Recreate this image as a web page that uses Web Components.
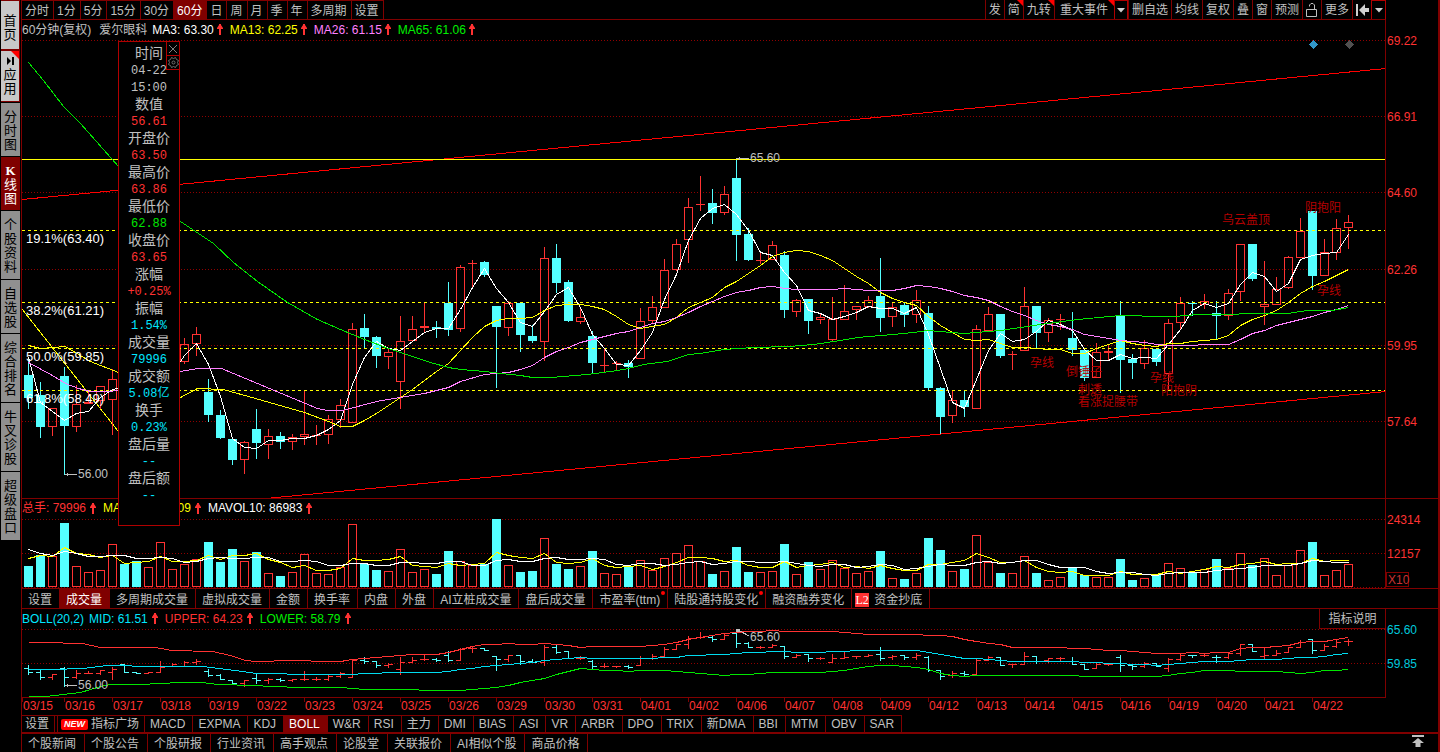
<!DOCTYPE html>
<html lang="zh-CN">
<head>
<meta charset="utf-8">
<title>爱尔眼科 60分钟</title>
<style>
html,body{margin:0;height:100%;background:#000}
body{font:12px/16px "Liberation Sans","Noto Sans CJK SC",sans-serif;color:#c0c0c0;--line:#800000}
</style>
</head>
<body>
<trading-app></trading-app>
<script>
const BASE = '*{box-sizing:border-box}button{font:inherit;color:inherit;background:none;border:0;margin:0;padding:0;border-radius:0;white-space:nowrap}';
class Base extends HTMLElement {
  constructor() { super(); this.attachShadow({ mode: 'open' }); }
  connectedCallback() { this.shadowRoot.innerHTML = '<style>' + BASE + this.css() + '</style>' + this.html(); }
  css() { return ''; }
  html() { return ''; }
}

/* Price data: high, body top, body bottom, low, direction (1 up, 0 down), volume bar top */
const DATA = `357 375 398 408 0 566|382 395 427 437 0 555|408 408 426 435 1 556|367 376 426 474 0 523|385 404 426 431 1 566|392 402 403 403 1 572|386 386 400 408 1 570|369 379 399 434 1 544|352 352 397 397 0 564|397 397 402 402 0 561|395 397 400 404 1 567|336 369 397 397 1 542|345 352 363 365 1 569|338 344 361 363 1 564|327 334 343 355 1 559|379 392 415 421 0 542|410 415 438 438 0 562|439 439 460 464 0 549|441 442 459 473 1 561|409 429 443 458 0 552|429 436 444 458 1 573|432 436 442 448 0 576|434 437 441 449 1 572|391 434 436 444 1 554|425 435 435 444 1 573|415 419 434 443 1 574|399 405 419 427 1 567|323 329 422 422 1 524|314 328 337 348 0 564|336 337 356 367 0 570|348 352 356 368 1 571|316 341 381 408 1 549|316 329 340 340 1 572|303 326 327 332 1 569|321 327 329 337 0 574|282 303 330 335 0 551|265 267 328 331 1 561|260 263 263 286 1 565|261 262 275 276 0 564|306 306 327 387 0 519|301 303 327 335 1 565|303 303 335 351 0 572|325 336 341 342 0 571|247 258 341 360 1 538|244 258 283 292 0 564|280 282 321 321 0 569|309 317 321 323 1 566|331 336 363 373 0 551|348 365 365 371 1 573|361 363 363 370 1 574|360 363 367 377 0 567|308 321 358 358 1 560|296 307 320 322 1 570|259 270 307 307 1 558|239 244 269 270 1 553|198 207 239 262 1 545|176 204 204 210 1 561|189 203 213 223 0 574|186 194 212 214 1 571|159 178 235 260 0 547|228 234 260 260 0 572|252 260 260 263 1 572|241 245 259 259 1 571|251 255 310 317 0 544|299 300 311 316 1 574|299 299 321 333 0 562|313 317 319 323 1 569|297 319 339 341 1 560|285 311 319 319 1 568|306 306 309 319 1 573|296 300 306 307 1 571|258 296 318 331 0 551|303 307 316 326 1 578|303 305 315 326 0 579|290 300 314 322 1 573|306 313 388 389 0 538|387 388 417 433 0 550|391 400 415 422 1 571|390 400 407 416 0 569|325 329 408 408 1 535|307 314 330 330 1 562|314 314 356 357 0 573|351 354 354 369 1 573|287 306 350 350 1 556|306 306 333 348 0 573|318 320 332 341 1 580|314 319 319 329 1 577|312 338 350 355 0 568|350 350 378 380 0 575|343 352 377 377 1 577|345 351 352 359 1 577|301 315 360 392 0 559|354 359 363 378 0 580|340 348 363 368 1 578|348 349 362 365 0 574|319 323 373 389 1 563|297 303 322 329 1 568|301 303 304 315 0 572|294 301 304 308 1 569|301 313 316 339 0 559|289 293 315 319 1 568|244 244 291 300 1 553|244 244 279 280 0 565|261 304 306 324 1 558|277 289 304 304 1 575|256 257 287 288 1 565|218 231 257 257 1 550|211 211 276 289 0 542|239 252 275 275 1 575|219 228 252 259 1 570|215 222 227 248 1 564`
  .split('|').map(r => { const [h, t, b, l, up, v] = r.split(' ').map(Number); return { h, t, b, l, up, v, c: up ? t : b, o: up ? b : t }; });
const X = i => 28 + 12 * i;
const avg = (a, i, n) => { let s = 0; for (let k = 0; k < n; k++) s += a[i - k]; return s / n; };
const series = (a, n, from) => a.map((_, i) => i).filter(i => i >= from).map(i => [X(i), avg(a, i, n)]);
const line = (pts, color, extra = '') => `<polyline fill="none" stroke="${color}" ${extra} points="${pts.map(p => (Math.round(p[0]) + .5) + ',' + (Math.round(p[1]) + .5)).join(' ')}"/>`;
const pairs = s => s.split(' ').map(p => p.split(',').map(Number));
const seg = (x1, y1, x2, y2, c, extra = '') => `<line x1="${x1}" y1="${y1}" x2="${x2}" y2="${y2}" stroke="${c}" ${extra}/>`;
const wide = (y, c, dash = '') => `<svg x="22" y="${y}" width="100%" height="1" overflow="visible"><line x1="0" y1="0.5" x2="100%" y2="0.5" stroke="${c}" stroke-dasharray="${dash}"/></svg>`;
const grid = ys => ys.map(y => wide(y, '#900000', '1 2')).join('');
const txt = (x, y, s, c, size = 12) => `<text x="${x}" y="${y}" fill="${c}" font-size="${size}">${s}</text>`;
const closes = DATA.map(d => d.c), vols = DATA.map(d => d.v);

function drawMain() {
  let s = grid([40, 116, 192, 269, 345, 421]);
  s += seg(22, 199.5, 1386, 68.5, '#f00') + seg(271, 498, 1386, 391.5, '#f00') + seg(22, 309, 118, 431, '#ff0');
  DATA.forEach((d, i) => {
    const x = X(i), c = d.up ? '#ff3232' : '#54ffff';
    if (d.up) {
      if (d.h < d.t) s += seg(x + .5, d.h, x + .5, d.t, c);
      if (d.l > d.b) s += seg(x + .5, d.b, x + .5, d.l + 1, c);
      s += d.b - d.t < 2 ? `<rect x="${x - 4}" y="${d.t}" width="9" height="${d.b - d.t + 1}" fill="${c}"/>`
        : `<rect x="${x - 3.5}" y="${d.t + .5}" width="8" height="${d.b - d.t}" fill="none" stroke="${c}"/>`;
    } else {
      s += seg(x + .5, d.h, x + .5, d.l + 1, c) + `<rect x="${x - 4}" y="${d.t}" width="9" height="${Math.max(1, d.b - d.t)}" fill="${c}"/>`;
    }
  });
  s += wide(159, '#ff0') + [230, 302, 348, 390].map(y => wide(y, '#ff0', '3 3')).join('');
  s += line([[28, 357], [40, 402], ...series(closes, 3, 2)], '#fff');
  s += line([...pairs('28,345 40,348 65,346 83,357 90,361 118,372 150,390 180,397 197,388 223,389 262,400 304,412'), ...series(closes, 13, 25)], '#ff0');
  s += line([...pairs('28,362 52,375 65,383 78,388 90,391 107,391 118,390 150,378 180,371 197,368 221,368 317,408 327,410 342,410 376,401 400,397 424,393 448,387 460,381 484,374'), ...series(closes, 26, 39)], '#ff80ff');
  s += line(pairs('28,62 43,80 63,106 80,123 118,166 180,221 213,243 233,262 257,281 287,302 317,319 340,329 364,339 388,348 400,352 430,362 448,367 460,369 484,371 500,373 520,375 532,377 550,377 587,374 617,370 628,368 643,364 667,361 688,354 700,353 723,349 753,347 788,346 813,344 840,340 857,337 893,334 913,332 927,330 963,333 1000,330 1040,324 1077,319 1120,315 1163,316 1173,316 1198,314 1228,314 1250,313 1287,313 1307,310 1332,310 1348,307'), '#00e600');
  s += txt(26, 243, '19.1%(63.40)', '#fff', 13) + txt(26, 315, '38.2%(61.21)', '#fff', 13) + txt(26, 361, '50.0%(59.85)', '#fff', 13) + txt(26, 403, '61.8%(58.49)', '#fff', 13);
  s += seg(65, 474.5, 77, 474.5, '#c0c0c0') + seg(67.5, 473, 67.5, 476, '#c0c0c0') + txt(78, 478, '56.00', '#c0c0c0');
  s += seg(736, 158.5, 749, 158.5, '#c0c0c0') + seg(739.5, 157, 739.5, 160, '#c0c0c0') + txt(750, 162, '65.60', '#c0c0c0');
  const m = '#b40000';
  s += [[1222, 224, '乌云盖顶'], [1305, 212, '阴抱阳'], [1317, 295, '孕线'], [1030, 367, '孕线'], [1066, 376, '倒锤子'], [1078, 394, '刺透'], [1078, 406, '看涨捉腰带'], [1150, 382, '孕线'], [1161, 395, '阳抱阴']].map(a => txt(...a, m)).join('');
  s += '<path d="M1313.500 40l4.500 4.500-4.500 4.500-4.500-4.500z" fill="#3296c8"/><path d="M1349.500 40l4.500 4.500-4.500 4.500-4.500-4.500z" fill="#505050"/>';
  return s;
}
function drawVolume() {
  let s = grid([519, 553, 587]);
  DATA.forEach((d, i) => {
    const x = X(i);
    s += d.up ? `<rect x="${x - 3.5}" y="${d.v + .5}" width="8" height="${586 - d.v}" fill="none" stroke="#ff3232"/>`
      : `<rect x="${x - 4}" y="${d.v}" width="9" height="${587 - d.v}" fill="#54ffff"/>`;
  });
  s += line([...pairs('28,558 40,555 52,556 64,547'), ...series(vols, 5, 4)], '#ff0');
  s += line([...pairs('28,549 40,553 52,555 64,551 76,553 88,556 100,556 112,555 124,555'), ...series(vols, 10, 9)], '#fff');
  return s;
}
function drawBoll() {
  const f = y => Math.round(629 + (y - 158) * .18);
  let s = grid([629, 663]);
  DATA.forEach((d, i) => {
    const x = X(i), c = d.up ? '#ff3232' : '#54ffff', o = f(d.o), k = f(d.c);
    s += `<path d="M${x - 4} ${o + .5}h4.500M${x + .5} ${k + .5}h4.500M${x + .5} ${f(d.h)}V${f(d.l) + 1}" stroke="${c}"/>`;
  });
  const mid = [], up = [], lo = [];
  for (let i = 19; i < DATA.length; i++) {
    const m = avg(closes, i, 20), sd = Math.sqrt(closes.slice(i - 19, i + 1).reduce((a, c) => a + (c - m) ** 2, 0) / 19);
    mid.push([X(i), f(m)]); up.push([X(i), f(m - 2 * sd)]); lo.push([X(i), f(m + 2 * sd)]);
  }
  s += line([...pairs('28,642 60,642 65,643 82,643 100,647 155,647 171,650 212,651 230,655 245,660'), ...up], '#ff3232');
  s += line([...pairs('28,669 52,669 82,668 107,665 155,666 202,666 235,670'), ...mid], '#00dcf0');
  s += line([...pairs('28,696 45,696 80,692 100,686 110,684 140,684 180,682 202,682 217,684'), ...lo], '#00e600');
  s += seg(65, 685.5, 77, 685.5, '#c0c0c0') + seg(67.5, 684, 67.5, 687, '#c0c0c0') + txt(78, 689, '56.00', '#c0c0c0');
  s += '<rect x="736" y="629" width="4" height="3" fill="#c0c0c0"/>' + seg(740, 631, 749, 636, '#c0c0c0') + txt(750, 641, '65.60', '#c0c0c0');
  return s;
}
const PANES = {
  main: { top: 39, draw: drawMain, color: '#ff3232', ticks: [[40, '69.22'], [116, '66.91'], [192, '64.60'], [269, '62.26'], [345, '59.95'], [421, '57.64']] },
  volume: { top: 517, draw: drawVolume, color: '#ff3232', ticks: [[519, '24314'], [553, '12157']] },
  boll: { top: 628, draw: drawBoll, color: '#00c8dc', ticks: [[629, '65.60'], [663, '59.85']] }
};

class ChartPane extends Base {
  css() {
    return `:host{display:grid;grid-template-columns:minmax(0,1fr) 53px;min-height:0;position:relative}
    .plot{display:flex;flex-direction:column;min-width:0;min-height:0;overflow:hidden}
    .head{display:flex;align-items:center;height:19px;flex:none;white-space:nowrap}
    :host([kind=volume]) .head{height:18px}
    svg{display:block}.plot>svg{flex:1;width:100%;min-height:0}
    .axis{border-left:1px solid var(--line);overflow:hidden}
    :host([kind=boll]) .plot{border-bottom:1px solid var(--line)}`;
  }
  html() {
    const p = PANES[this.getAttribute('kind')];
    const headH = this.getAttribute('kind') === 'volume' ? 18 : 19;
    return `<div class="plot"><div class="head"><slot></slot></div><svg shape-rendering="crispEdges" role="img" aria-label="chart"><g transform="translate(-22 ${-p.top})">${p.draw()}</g></svg></div>
    <div class="axis"><svg width="52" height="100%"><g transform="translate(0 ${headH - p.top})">${p.ticks.map(t => txt(1, t[0] + 5, t[1], p.color)).join('')}${headH === 18 ? '<rect x="0.500" y="572.500" width="22" height="14" fill="none" stroke="#800000"/>' + txt(2, 584, 'X10', '#c83232') : ''}</g></svg></div><slot name="over"></slot>`;
  }
}
class LegendItem extends Base {
  css() { return `:host{display:inline-flex;align-items:center;margin-right:7px}svg{margin-left:var(--arrow-gap,4px);display:block}`; }
  html() { return `<span><slot></slot></span><svg width="6" height="11"><path d="M0 4L2 1V0h2v1l2 3v1H4v6H2V5H0z" fill="#ff3232"/></svg>`; }
}

class TabBar extends Base {
  css() {
    return `:host{display:flex;min-width:0;overflow:hidden}
    button{height:100%;padding:var(--drop,0px) var(--pr,7px) 0 var(--pl,6px);border-right:1px solid var(--line);display:flex;align-items:center;position:relative;flex:none}
    .on{background:#800000;color:#fff}
    .dot::after{content:"";position:absolute;right:2px;top:2px;width:4px;height:4px;border-radius:2px;background:red}
    .new{border-left:1px solid var(--line);padding:0 5px 0 3px}
    .badge{background:#f00;color:#fff;font-size:9px;line-height:11px;font-weight:bold;font-style:italic;padding:0 3px;margin-right:3px;border-radius:2px}
    .l2{background:#ff3232;color:#fff;font:12px/14px "Liberation Serif",serif;width:14px;text-align:center;margin-right:5px}
    .lpad{padding-left:3px}
    :host([lead]) button:first-of-type{padding:0 5px 0 3px;margin-right:2px}`;
  }
  html() {
    return this.getAttribute('items').split(',').map(t => {
      const on = t[0] === '*', dot = t[0] === '!';
      if (on || dot) t = t.slice(1);
      if (t === '指标广场') return `<button class="new"><span class="badge">NEW</span>${t}</button>`;
      if (t === '资金抄底') return `<button class="lpad"><span class="l2">L2</span>${t}</button>`;
      return `<button class="${on ? 'on' : dot ? 'dot' : ''}">${t.replace('&', '&amp;')}</button>`;
    }).join('');
  }
}

class TopBar extends Base {
  css() {
    return `:host{display:flex;justify-content:space-between;height:20px;margin-right:52px;border-bottom:1px solid var(--line);border-right:1px solid #b00000}
    tab-bar{--pr:4px;--pl:3px;--drop:1px;border-top:1px solid var(--line)}
    .r{display:flex}.r button{border-left:1px solid var(--line);padding:1px 3px 0;height:19px;position:relative;display:flex;align-items:center;justify-content:center}
    .r .big{padding:1px 6px 0 5px}.r .i{width:19px;padding:0}.r .dd{width:14px;border:1px solid #b00000;border-bottom:0;padding:0}.r .last{width:14px;border-right:0}
    .hot::after{content:"";position:absolute;right:0;top:0;border:3px solid;border-color:#f00 #f00 transparent transparent}
    svg{display:block}`;
  }
  html() {
    const dd = '<svg width="8" height="5"><path d="M0 0h8L4 4.500z" fill="#d0d0d0"/></svg>';
    return `<tab-bar items="分时,1分,5分,15分,30分,*60分,日,周,月,季,年,多周期,设置"></tab-bar>
    <div class="r"><button>发</button><button class="hot">简</button><button class="hot">九转</button><button class="big hot">重大事件</button><button class="dd" aria-label="展开">${dd}</button>
    <button>删自选</button><button>均线</button><button>复权</button><button>叠</button><button>窗</button><button>预测</button>
    <button class="i" aria-label="锁定"><svg width="13" height="16"><path d="M1.500 7.500h10v7h-10zM4.500 4.500V3l1.500-1.500h2L9.500 3v4.500" fill="none" stroke="#c0c0c0"/></svg></button>
    <button>更多</button><button class="i" aria-label="收起"><svg width="13" height="12"><path d="M0 0h2v12H0zM3 6l6-6v4h4v4H9v4z" fill="#d0d0d0"/></svg></button>
    <button class="dd last" aria-label="菜单">${dd}</button></div>`;
  }
}

class SideRail extends Base {
  css() {
    return `:host{display:block;width:20px;padding-left:1px;flex:none}
    button{display:flex;flex-direction:column;align-items:center;justify-content:center;width:19px;height:54px;background:#909090;color:#000;border-bottom:1px solid #000;padding-top:2px;line-height:14px;font-size:13px;position:relative;white-space:normal}
    span{width:13px;word-break:break-all;text-align:center}
    .l{height:69px}.w{height:50px;background:#c8c8c8;border:1px solid var(--line);border-left:0;padding-top:5px}.a{height:52px;padding-top:0;margin-bottom:1px}
    .on{background:#800000;color:#fff}
    .a::after{content:"";position:absolute;right:0;top:0;border:4px solid;border-color:#f00 #f00 transparent transparent}
    svg{display:block;margin-bottom:3px}b{font-family:"Liberation Serif",serif}`;
  }
  html() {
    return `<nav><button class="w"><span>首页</span></button><button class="w a"><svg width="8" height="8"><path d="M1 0v8l4-4zM6 0h2v8H6z"/></svg><span>应用</span></button>
    <button><span>分时图</span></button><button class="on"><span><b>K</b>线图</span></button><button class="l"><span>个股资料</span></button><button><span>自选股</span></button>
    <button class="l"><span>综合排名</span></button><button class="l"><span>牛叉诊股</span></button><button class="l"><span>超级盘口</span></button></nav>`;
  }
}

class DataPanel extends Base {
  css() {
    return `:host{display:block;width:62px;height:485px;background:#000;border:1px solid #b00000;padding-top:3px}
    dl{margin:0;text-align:center;line-height:17px}dt{font-size:14px;height:17px}dd{margin:0;height:17px;font:12px/18px "Liberation Mono","Noto Sans CJK SC",monospace;color:#00e6ff}
    .r{color:#ff3232}.g{color:#00e600}.n{color:#c0c0c0}
    .t{position:absolute;right:-1px;top:-1px;display:grid}.t button{width:14px;height:15px;border:1px solid #b00000;display:grid;place-items:center;background:#000}.t button+button{margin-top:-1px}`;
  }
  html() {
    const rows = [['时间', '04-22', 'n'], ['', '15:00', 'n'], ['数值', '56.61', 'r'], ['开盘价', '63.50', 'r'], ['最高价', '63.86', 'r'], ['最低价', '62.88', 'g'], ['收盘价', '63.65', 'r'], ['涨幅', '+0.25%', 'r'], ['振幅', '1.54%', ''], ['成交量', '79996', ''], ['成交额', '5.08亿', ''], ['换手', '0.23%', ''], ['盘后量', '--', ''], ['盘后额', '--', '']];
    return `<dl>${rows.map(r => (r[0] ? `<dt>${r[0]}</dt>` : '') + `<dd class="${r[2]}">${r[1]}</dd>`).join('')}</dl>
    <div class="t"><button aria-label="关闭"><svg width="10" height="10"><path d="M1 1l8 8M9 1l-8 8" stroke="#808080"/></svg></button><button aria-label="设置"><svg width="11" height="11" fill="none" stroke="#707070"><path d="M3.500 .5l2 1 2-1 1 2 2 1-1 2 1 2-2 1-1 2-2-1-2 1-1-2-2-1 1-2-1-2 2-1z"/><circle cx="5.500" cy="5.500" r="1.500"/></svg></button></div>`;
  }
}

class DateAxis extends Base {
  css() { return `:host{display:flex;height:17px;color:#ff3232;overflow:hidden}span{width:48px;flex:none;padding-left:1px;line-height:16px;background:linear-gradient(var(--line),var(--line)) no-repeat 0 0/1px 4px}span:first-of-type{width:42px}`; }
  html() { return '03/15 03/16 03/17 03/18 03/19 03/22 03/23 03/24 03/25 03/26 03/29 03/30 03/31 04/01 04/02 04/06 04/07 04/08 04/09 04/12 04/13 04/14 04/15 04/16 04/19 04/20 04/21 04/22'.split(' ').map(d => `<span>${d}</span>`).join(''); }
}

class TradingApp extends Base {
  css() {
    return `:host{display:flex;height:100vh;min-height:600px}
    main{flex:1;min-width:0;display:flex;flex-direction:column;border-left:1px solid var(--line);border-right:2px solid var(--line);margin-left:1px;position:relative}
    .m{flex:1;border-bottom:1px solid var(--line);--arrow-gap:3px}.v{height:90px;border-bottom:1px solid var(--line)}.b{height:89px}
    .vt{height:20px;border-bottom:1px solid var(--line);--drop:2px}.it{height:17px;border-top:1px solid var(--line);width:fit-content;--pl:5px}
    .nt{display:flex;justify-content:space-between;height:20px;border-top:2px solid var(--line);align-items:stretch;--pl:6px;--pr:8px;--drop:2px}
    data-panel{position:absolute;left:96px;top:41px}
    .help{position:absolute;right:52px;top:0;width:67px;height:20px;border:1px solid var(--line);border-top:0}
    .top{width:12px;margin-right:14px}
    .y{color:#ff0}.p{color:#ff80ff}.g{color:#00f000}.r{color:#ff3232}.w{color:#fff}.c{color:#00e6ff}.n{margin-right:8px}.k{margin-right:5px}`;
  }
  html() {
    return `<side-rail></side-rail><main><top-bar></top-bar>
    <chart-pane class="m" kind="main"><span class="n">60分钟(复权)</span><span class="k">爱尔眼科</span><legend-item class="w">MA3: 63.30</legend-item><legend-item class="y">MA13: 62.25</legend-item><legend-item class="p">MA26: 61.15</legend-item><legend-item class="g">MA65: 61.06</legend-item></chart-pane>
    <chart-pane class="v" kind="volume"><legend-item class="r">总手: 79996</legend-item><legend-item class="y">MAVOL5: 95809</legend-item><legend-item class="w">MAVOL10: 86983</legend-item></chart-pane>
    <tab-bar class="vt" items="设置,*成交量,多周期成交量,虚拟成交量,金额,换手率,内盘,外盘,AI立桩成交量,盘后成交量,!市盈率(ttm),!陆股通持股变化,融资融券变化,资金抄底"></tab-bar>
    <chart-pane class="b" kind="boll"><span class="c k">BOLL(20,2)</span><legend-item class="c">MID: 61.51</legend-item><legend-item class="r">UPPER: 64.23</legend-item><legend-item class="g">LOWER: 58.79</legend-item><button slot="over" class="help">指标说明</button></chart-pane>
    <date-axis></date-axis>
    <tab-bar class="it" lead items="设置,指标广场,MACD,EXPMA,KDJ,*BOLL,W&amp;R,RSI,主力,DMI,BIAS,ASI,VR,ARBR,DPO,TRIX,新DMA,BBI,MTM,OBV,SAR"></tab-bar>
    <div class="nt"><tab-bar items="个股新闻,个股公告,个股研报,行业资讯,高手观点,论股堂,关联报价,AI相似个股,商品价格"></tab-bar><button class="top" aria-label="回到顶部"><svg width="12" height="12"><path d="M0 0h12v2H0zM6 3l6 5H8.500v4h-5V8H0z" fill="#c0c0c0"/></svg></button></div>
    <data-panel></data-panel></main>`;
  }
}
[['legend-item', LegendItem], ['tab-bar', TabBar], ['top-bar', TopBar], ['side-rail', SideRail], ['chart-pane', ChartPane], ['data-panel', DataPanel], ['date-axis', DateAxis], ['trading-app', TradingApp]].forEach(([n, c]) => customElements.define(n, c));
</script>
</body>
</html>
